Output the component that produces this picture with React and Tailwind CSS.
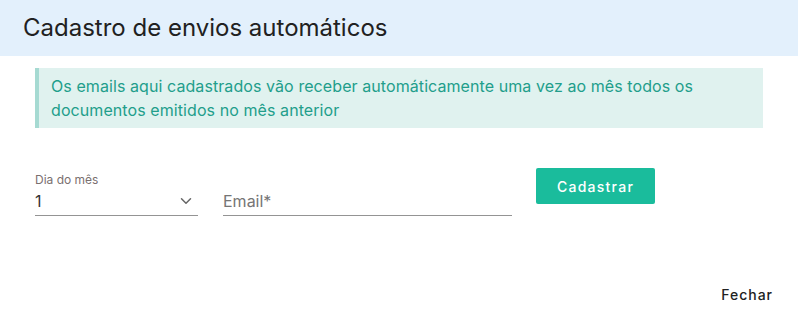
import { ChevronDown } from 'lucide-react';

// Modal: cadastro de envios automáticos
export default function App() {
  return (
    <div className="w-[798px] h-[321px] bg-white font-['Inter',sans-serif] flex flex-col">
      {/* Header */}
      <div className="h-[56px] bg-[#e3f0fc] flex items-center px-[23px]">
        <h2 className="text-[24px] text-[#212121]">Cadastro de envios automáticos</h2>
      </div>

      <div className="px-[35px] pt-[12px]">
        {/* Info alert */}
        <div className="bg-[#e0f2ef] border-l-4 border-[#a6dad2] pl-[12px] pr-4 py-[6px] w-[728px]">
          <p className="text-[16px] leading-[24px] text-[#229e8b] tracking-[0.08px]">
            Os emails aqui cadastrados vão receber automáticamente uma vez ao mês todos os documentos emitidos no mês anterior
          </p>
        </div>

        {/* Form */}
        <div className="flex items-start mt-[40px]">
          <div className="w-[163px] border-b border-[#949494] pt-[5px]">
            <div className="text-[12px] leading-[14px] text-[#7a6f6f]">Dia do mês</div>
            <div className="flex items-center justify-between h-[28px]">
              <span className="text-[16px] text-[#333]">1</span>
              <ChevronDown className="w-[18px] h-[18px] text-[#666] mr-[3px]" strokeWidth={2} />
            </div>
          </div>
          <div className="w-[289px] ml-[25px] border-b border-[#949494] pt-[19px]">
            <div className="h-[28px] flex items-center text-[16px] text-[#757575]">Email*</div>
          </div>
          <button className="ml-[24px] w-[119px] h-[36px] rounded-[2px] bg-[#1abc9c] text-white text-[14px] font-medium tracking-[1.25px]">
            Cadastrar
          </button>
        </div>
      </div>

      <div className="mt-auto flex justify-end pr-[25px] pb-[16px]">
        <button className="text-[14px] font-medium tracking-[1px] text-[#212121]">Fechar</button>
      </div>
    </div>
  );
}
